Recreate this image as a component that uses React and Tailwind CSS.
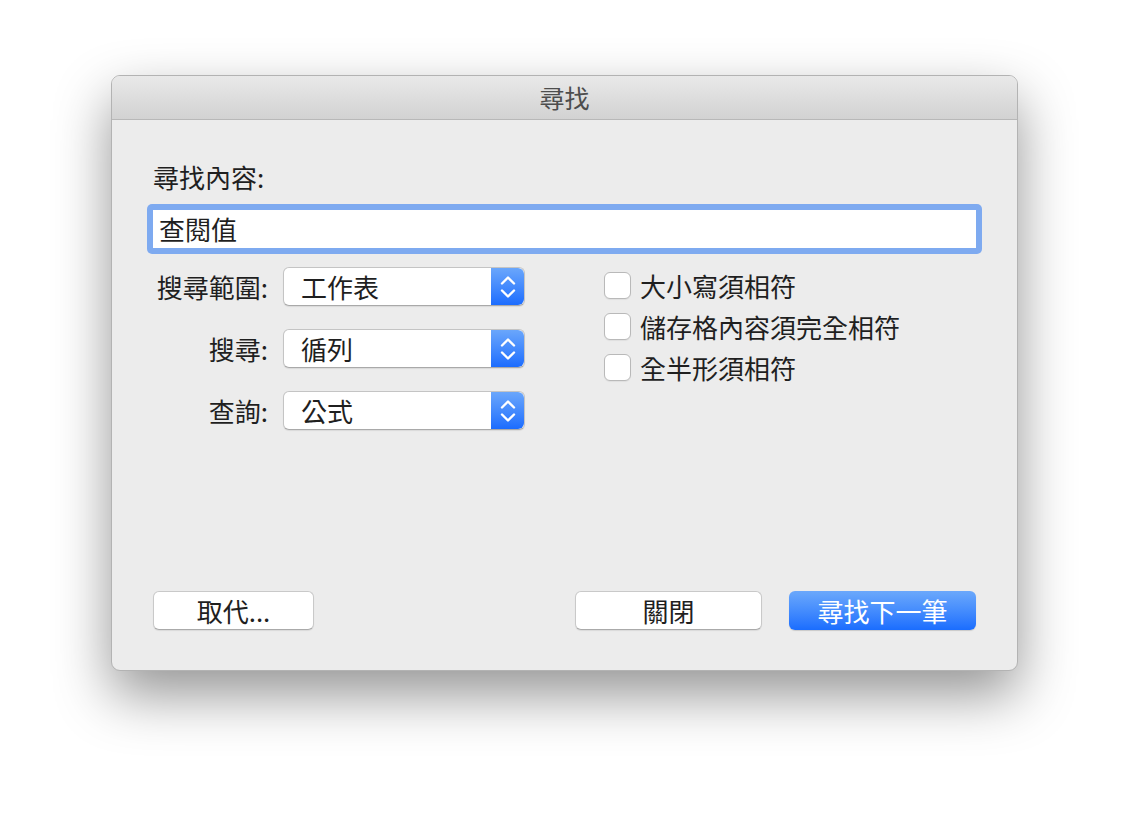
import React from 'react';

const font = { fontFamily: '"Noto Sans CJK TC", "Noto Sans", sans-serif' };

const Stepper = () => (
  <div className="flex h-full w-[33px] items-center justify-center rounded-r-[6px] bg-gradient-to-b from-[#6aa6fb] to-[#1b6cfe]">
    <svg width="16" height="28" viewBox="0 0 16 28" fill="none">
      <path d="M2 10.5 L8 4.5 L14 10.5" stroke="white" strokeWidth="2.4" strokeLinecap="round" strokeLinejoin="round" />
      <path d="M2 17.5 L8 23.5 L14 17.5" stroke="white" strokeWidth="2.4" strokeLinecap="round" strokeLinejoin="round" />
    </svg>
  </div>
);

const PopupRow = ({ label, value }) => (
  <div className="flex items-center gap-[15px]">
    <div className="w-[115px] text-right text-[26px] leading-[26px] text-[#1f1f1f]">{label}</div>
    <div className="flex h-[39px] w-[242px] items-center rounded-[6px] border border-[#c4c4c4] border-b-[#a9a9a9] bg-white shadow-[0_1px_1px_rgba(0,0,0,0.08)]">
      <div className="flex-1 pl-[17px] text-[26px] leading-[26px] text-[#1f1f1f]">{value}</div>
      <Stepper />
    </div>
  </div>
);

const Check = ({ label }) => (
  <div className="flex h-[27px] items-center gap-[9px]">
    <div className="h-[27px] w-[27px] rounded-[6px] border border-[#b9b9b9] bg-white shadow-[0_1px_1px_rgba(0,0,0,0.06)]" />
    <div className="text-[26px] leading-[26px] text-[#1f1f1f]">{label}</div>
  </div>
);

const Button = ({ children, width, primary }) => (
  <div
    className={
      primary
        ? 'flex h-[39px] items-center justify-center rounded-[6px] bg-gradient-to-b from-[#6ba8fb] to-[#1a6dfe] text-[26px] leading-[26px] text-white shadow-[0_1px_1px_rgba(0,0,0,0.15)]'
        : 'flex h-[39px] items-center justify-center rounded-[6px] border border-[#c9c9c9] border-b-[#aaaaaa] bg-white text-[26px] leading-[26px] text-[#1f1f1f] shadow-[0_1px_1px_rgba(0,0,0,0.08)]'
    }
    style={{ width }}
  >
    {children}
  </div>
);

export default function App() {
  return (
    <div className="h-[820px] w-[1130px] overflow-hidden bg-white pl-[111px] pt-[75px]" style={font}>
      <div className="flex h-[596px] w-[907px] flex-col overflow-hidden rounded-[9px] border border-[#b3b3b3] bg-[#ececec] shadow-[0_24px_55px_rgba(0,0,0,0.42)]">
        {/* title bar */}
        <div className="flex h-[44px] shrink-0 items-center justify-center border-b border-[#b8b8b8] bg-gradient-to-b from-[#e9e9e9] to-[#d2d2d2]">
          <span className="text-[25px] leading-[25px] text-[#4d4d4d]">尋找</span>
        </div>

        {/* body */}
        <div className="flex flex-1 flex-col pl-[41px] pr-[41px] pb-[40px]">
          <div className="mt-[44px] text-[26px] leading-[26px] text-[#1f1f1f]">尋找內容:</div>

          {/* search field with focus ring */}
          <div className="-ml-[6px] mt-[14px] w-[835px] rounded-[5px] bg-[#7eaaf0] p-[6px]">
            <div className="flex h-[38px] items-center bg-white pl-[6px]">
              <span className="text-[26px] leading-[26px] text-[#1f1f1f]">查閱值</span>
            </div>
          </div>

          <div className="mt-[13px] flex gap-[79px]">
            <div className="flex flex-col gap-[23px]">
              <PopupRow label="搜尋範圍:" value="工作表" />
              <PopupRow label="搜尋:" value="循列" />
              <PopupRow label="查詢:" value="公式" />
            </div>
            <div className="mt-[5px] flex flex-col gap-[14px]">
              <Check label="大小寫須相符" />
              <Check label="儲存格內容須完全相符" />
              <Check label="全半形須相符" />
            </div>
          </div>

          <div className="mt-auto flex items-center">
            <Button width={161}>取代...</Button>
            <div className="flex-1" />
            <Button width={187}>關閉</Button>
            <div className="w-[27px]" />
            <Button width={187} primary>尋找下一筆</Button>
          </div>
        </div>
      </div>
    </div>
  );
}
